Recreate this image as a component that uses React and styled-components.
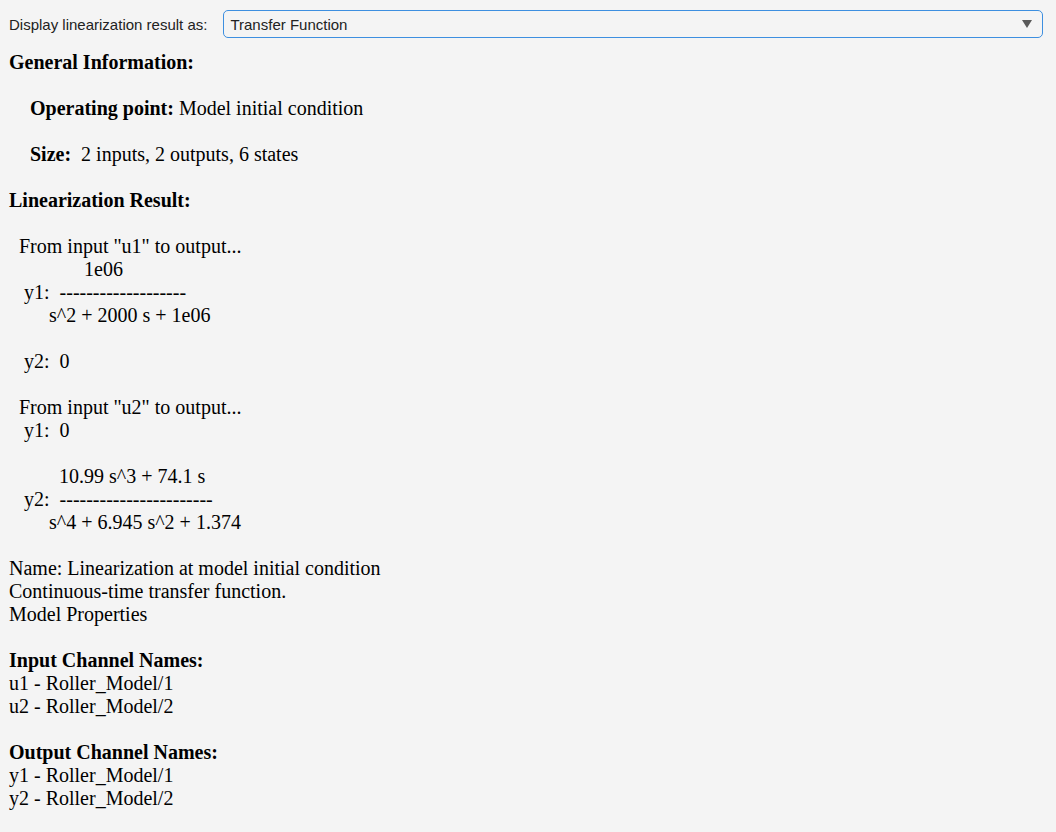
import React from 'react'
import styled, { createGlobalStyle } from 'styled-components'

const GlobalStyle = createGlobalStyle`
  html, body {
    margin: 0;
    padding: 0;
    background: #f4f4f4;
  }
`

const Page = styled.div`
  width: 1056px;
  min-height: 832px;
  background: #f4f4f4;
  color: #000;
`

const Toolbar = styled.div`
  display: flex;
  align-items: center;
  gap: 16px;
  padding: 10px 13px 0 9px;
  font-family: "Liberation Sans", Arial, sans-serif;
  font-size: 15px;
  color: #222;
`

const ToolbarLabel = styled.span`
  white-space: nowrap;
`

const SelectBox = styled.div`
  flex: 1;
  height: 28px;
  box-sizing: border-box;
  display: flex;
  align-items: center;
  justify-content: space-between;
  padding: 0 10px 0 6px;
  border: 1px solid #3d8fe0;
  border-radius: 5px;
  background: #f4f4f4;
  color: #222;
`

const Arrow = styled.span`
  width: 0;
  height: 0;
  border-left: 5px solid transparent;
  border-right: 5px solid transparent;
  border-top: 8px solid #5a5a5a;
`

const Report = styled.div`
  padding: 13px 0 0 9px;
  font-family: "Liberation Serif", "Times New Roman", serif;
  font-size: 20px;
  line-height: 23px;
`

const Line = styled.div`
  height: 23px;
  white-space: pre;
  padding-left: ${p => p.$indent || 0}px;
  font-weight: ${p => (p.$bold ? 700 : 400)};
`

const Label = styled.b`
  font-weight: 700;
`

const Blank = () => <Line> </Line>

const tfLines = [
  { text: 'From input "u1" to output...', indent: 10 },
  { text: '            1e06', indent: 15 },
  { text: 'y1:  -------------------', indent: 15 },
  { text: '     s^2 + 2000 s + 1e06', indent: 15 },
  { text: '', indent: 15 },
  { text: 'y2:  0', indent: 15 },
  { text: '', indent: 15 },
  { text: 'From input "u2" to output...', indent: 10 },
  { text: 'y1:  0', indent: 15 },
  { text: '', indent: 15 },
  { text: '       10.99 s^3 + 74.1 s', indent: 15 },
  { text: 'y2:  -----------------------', indent: 15 },
  { text: '     s^4 + 6.945 s^2 + 1.374', indent: 15 },
]

const App = () => {
  return (
    <Page>
      <GlobalStyle />
      <Toolbar>
        <ToolbarLabel>Display linearization result as:</ToolbarLabel>
        <SelectBox>
          <span>Transfer Function</span>
          <Arrow />
        </SelectBox>
      </Toolbar>

      <Report>
        <Line $bold>General Information:</Line>
        <Blank />
        <Line $indent={21}><Label>Operating point:</Label> Model initial condition</Line>
        <Blank />
        <Line $indent={21}><Label>Size:</Label>  2 inputs, 2 outputs, 6 states</Line>
        <Blank />
        <Line $bold>Linearization Result:</Line>
        <Blank />
        {tfLines.map((l, i) => (
          <Line key={i} $indent={l.indent}>{l.text || ' '}</Line>
        ))}
        <Blank />
        <Line>Name: Linearization at model initial condition</Line>
        <Line>Continuous-time transfer function.</Line>
        <Line>Model Properties</Line>
        <Blank />
        <Line $bold>Input Channel Names:</Line>
        <Line>u1 - Roller_Model/1</Line>
        <Line>u2 - Roller_Model/2</Line>
        <Blank />
        <Line $bold>Output Channel Names:</Line>
        <Line>y1 - Roller_Model/1</Line>
        <Line>y2 - Roller_Model/2</Line>
      </Report>
    </Page>
  )
}

export default App
